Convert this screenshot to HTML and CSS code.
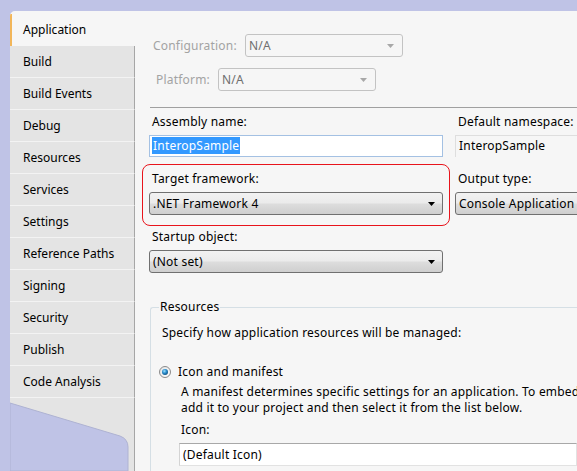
FILE: index.html
```html
<!DOCTYPE html>
<html lang="en">
<head>
    <meta charset="UTF-8">
    <title>Project Properties - Application</title>
    <link rel="stylesheet" href="styles.css">
</head>
<body>
    <div class="window">
        <div class="sidebar">
            <ul class="tabs">
                <li class="tab active">Application</li>
                <li class="tab">Build</li>
                <li class="tab">Build Events</li>
                <li class="tab">Debug</li>
                <li class="tab">Resources</li>
                <li class="tab">Services</li>
                <li class="tab">Settings</li>
                <li class="tab">Reference Paths</li>
                <li class="tab">Signing</li>
                <li class="tab">Security</li>
                <li class="tab">Publish</li>
                <li class="tab">Code Analysis</li>
            </ul>
            <div class="fold">
                <svg width="124" height="73" viewBox="0 0 124 73">
                    <path d="M0 5 L110 38 Q118 41 118 49 L118 73 L0 73 Z" fill="#bfc3e6" stroke="#aeb2d2" stroke-width="1"/>
                </svg>
            </div>
        </div>

        <div class="page">
            <div class="config-row">
                <span class="dim-label">Configuration:</span>
                <div class="combo disabled">
                    <span>N/A</span>
                    <svg class="arrow" width="7" height="4" viewBox="0 0 7 4"><path d="M0 0 L7 0 L3.5 4 Z" fill="#a8a8a8"/></svg>
                </div>
            </div>
            <div class="config-row platform">
                <span class="dim-label">Platform:</span>
                <div class="combo disabled">
                    <span>N/A</span>
                    <svg class="arrow" width="7" height="4" viewBox="0 0 7 4"><path d="M0 0 L7 0 L3.5 4 Z" fill="#a8a8a8"/></svg>
                </div>
            </div>

            <div class="sep"></div>

            <div class="fields">
                <div class="field">
                    <label>Assembly name:</label>
                    <div class="textbox focused"><span class="sel">InteropSample</span></div>
                </div>
                <div class="field">
                    <label>Default namespace:</label>
                    <div class="textbox plain">InteropSample</div>
                </div>
                <div class="field marked">
                    <label>Target framework:</label>
                    <div class="combo">
                        <span>.NET Framework 4</span>
                        <svg class="arrow" width="7" height="4" viewBox="0 0 7 4"><path d="M0 0 L7 0 L3.5 4 Z" fill="#000"/></svg>
                    </div>
                </div>
                <div class="field">
                    <label>Output type:</label>
                    <div class="combo">
                        <span>Console Application</span>
                    </div>
                </div>
                <div class="field">
                    <label>Startup object:</label>
                    <div class="combo">
                        <span>(Not set)</span>
                        <svg class="arrow" width="7" height="4" viewBox="0 0 7 4"><path d="M0 0 L7 0 L3.5 4 Z" fill="#000"/></svg>
                    </div>
                </div>
            </div>

            <div class="group">
                <span class="legend">Resources</span>
                <p class="hint">Specify how application resources will be managed:</p>
                <div class="radio-row">
                    <svg width="12" height="12" viewBox="0 0 12 12">
                        <defs>
                            <radialGradient id="dot" cx="0.4" cy="0.35" r="0.7">
                                <stop offset="0" stop-color="#9fe3ff"/>
                                <stop offset="0.5" stop-color="#2a8ccc"/>
                                <stop offset="1" stop-color="#0d4f7f"/>
                            </radialGradient>
                            <linearGradient id="ring" x1="0" y1="0" x2="1" y2="1">
                                <stop offset="0" stop-color="#e4e4e4"/>
                                <stop offset="1" stop-color="#ffffff"/>
                            </linearGradient>
                        </defs>
                        <circle cx="6" cy="6" r="5.5" fill="url(#ring)" stroke="#8a8a8a"/>
                        <circle cx="6" cy="6" r="3" fill="url(#dot)"/>
                    </svg>
                    <span>Icon and manifest</span>
                </div>
                <div class="radio-body">
                    <p>A manifest determines specific settings for an application. To embed</p>
                    <p>add it to your project and then select it from the list below.</p>
                    <label class="icon-label">Icon:</label>
                    <div class="textbox white">(Default Icon)</div>
                </div>
            </div>
        </div>
    </div>
</body>
</html>
```

FILE: styles.css
```css
* {
    box-sizing: border-box;
}
html, body {
    margin: 0;
    height: 100%;
}
body {
    background-color: #bfc3e6;
    font-family: "Noto Sans", "Open Sans", sans-serif;
    font-size: 12px;
    line-height: 16px;
    color: #000;
    overflow: hidden;
    padding: 11px 0 0 10px;
}
.window {
    display: flex;
    width: 567px;
    height: 460px;
    background-color: #f6f6f6;
    border-top-left-radius: 5px;
    overflow: hidden;
}

/* left tab strip */
.sidebar {
    width: 125px;
    flex-shrink: 0;
    display: flex;
    flex-direction: column;
    padding-top: 3px;
}
.tabs {
    list-style: none;
    margin: 0;
    padding: 0;
}
.tab {
    height: 32px;
    line-height: 31px;
    padding-left: 13px;
    background-color: #e4e4e4;
    border-right: 1px solid #a6a6a6;
    border-bottom: 1px solid #f3f3f3;
    white-space: nowrap;
}
.tab.active {
    background-color: #f6f6f6;
    border-right: none;
    border-bottom: none;
    border-left: 2px solid #f2b65a;
    padding-left: 11px;
    line-height: 32px;
}
.fold {
    flex: 1;
    background-color: #e4e4e4;
    border-right: 1px solid #a6a6a6;
}
.fold svg {
    display: block;
}

/* right page */
.page {
    flex: 1;
    min-width: 0;
    padding: 23px 0 0 14px;
    white-space: nowrap;
    letter-spacing: 0.2px;
}
.config-row {
    display: flex;
    align-items: center;
    height: 23px;
}
.config-row.platform {
    margin-top: 11px;
}
.dim-label {
    color: #a3a3a3;
    width: 92px;
    margin-left: 4px;
}
.platform .dim-label {
    width: 62px;
    margin-left: 7px;
}
.combo {
    display: flex;
    align-items: center;
    height: 23px;
    padding: 0 7px 0 3px;
    border: 1px solid #707070;
    border-radius: 3px;
    background: linear-gradient(#f2f2f2 0%, #ebebeb 48%, #dddddd 52%, #cfcfcf 100%);
}
.combo span {
    flex: 1;
    overflow: hidden;
}
.combo.disabled {
    width: 158px;
    border-color: #c3c3c3;
    background: #f6f6f6;
    color: #6f6f6f;
    padding-right: 8px;
}
.sep {
    margin: 16px 0 0 1px;
    border-top: 1px solid #a0a0a0;
}

.fields {
    display: grid;
    grid-template-columns: 294px 1fr;
    column-gap: 12px;
    row-gap: 14px;
    margin-top: 6px;
}
.field label {
    display: block;
    padding-left: 3px;
    margin-bottom: 5px;
}
.field.marked {
    position: relative;
}
.field.marked::before {
    content: "";
    position: absolute;
    top: -7px;
    left: -7px;
    right: -7px;
    bottom: -11px;
    border: 1px solid #e8141c;
    border-radius: 8px;
}
.textbox {
    height: 22px;
    line-height: 20px;
    padding-left: 2px;
    border: 1px solid #abadb3;
    overflow: hidden;
}
.textbox.focused {
    background-color: #fff;
    border-color: #a4c1e3;
}
.textbox .sel {
    display: inline-block;
    background-color: #3399ff;
    color: #fff;
    padding: 0 1px;
    line-height: 17px;
    margin-top: 1px;
}
.textbox.plain {
    border-color: #dedede;
    border-right: none;
    border-bottom: none;
    padding-left: 3px;
}

/* resources group */
.group {
    margin: 34px 0 0 1px;
    border: 1px solid #d5dfe5;
    border-right: none;
    border-bottom: none;
    border-top-left-radius: 3px;
    padding-left: 8px;
    height: 200px;
}
.legend {
    display: block;
    width: max-content;
    margin-top: -9px;
    padding: 0 1px;
    background-color: #f6f6f6;
}
.hint {
    margin: 10px 0 0 3px;
}
.radio-row {
    display: flex;
    align-items: center;
    gap: 7px;
    margin-top: 23px;
}
.radio-row svg {
    display: block;
}
.radio-body {
    padding-left: 22px;
    margin-top: 4px;
}
.radio-body p {
    margin: 0;
}
.icon-label {
    display: block;
    margin-top: 6px;
}
.textbox.white {
    margin: 5px 0 0 -2px;
    height: 23px;
    line-height: 21px;
    background-color: #fff;
    border-color: #a8a8a8 #e2e2e2 #e2e2e2 #d4d4d4;
    padding-left: 3px;
}
```
